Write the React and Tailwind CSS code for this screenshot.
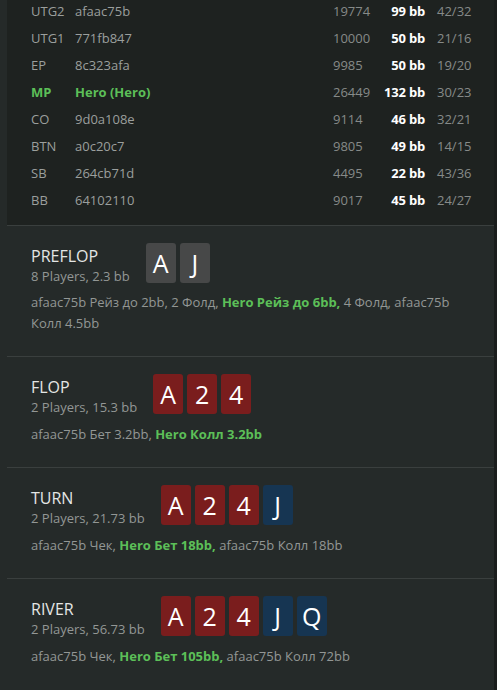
const players = [
  { pos: "UTG2", name: "afaac75b", stack: "19774", bb: "99 bb", stats: "42/32" },
  { pos: "UTG1", name: "771fb847", stack: "10000", bb: "50 bb", stats: "21/16" },
  { pos: "EP", name: "8c323afa", stack: "9985", bb: "50 bb", stats: "19/20" },
  { pos: "MP", name: "Hero (Hero)", stack: "26449", bb: "132 bb", stats: "30/23", hero: true },
  { pos: "CO", name: "9d0a108e", stack: "9114", bb: "46 bb", stats: "32/21" },
  { pos: "BTN", name: "a0c20c7", stack: "9805", bb: "49 bb", stats: "14/15" },
  { pos: "SB", name: "264cb71d", stack: "4495", bb: "22 bb", stats: "43/36" },
  { pos: "BB", name: "64102110", stack: "9017", bb: "45 bb", stats: "24/27" },
];

const streets = [
  {
    title: "PREFLOP",
    sub: "8 Players, 2.3 bb",
    cards: [["A", "gray"], ["J", "gray"]],
    actions: [
      ["afaac75b Рейз до 2bb, 2 Фолд, ", false],
      ["Hero Рейз до 6bb,", true],
      [" 4 Фолд, afaac75b Колл 4.5bb", false],
    ],
    multi: true,
  },
  {
    title: "FLOP",
    sub: "2 Players, 15.3 bb",
    cards: [["A", "red"], ["2", "red"], ["4", "red"]],
    actions: [
      ["afaac75b Бет 3.2bb, ", false],
      ["Hero Колл 3.2bb", true],
    ],
  },
  {
    title: "TURN",
    sub: "2 Players, 21.73 bb",
    cards: [["A", "red"], ["2", "red"], ["4", "red"], ["J", "blue"]],
    actions: [
      ["afaac75b Чек, ", false],
      ["Hero Бет 18bb,", true],
      [" afaac75b Колл 18bb", false],
    ],
  },
  {
    title: "RIVER",
    sub: "2 Players, 56.73 bb",
    cards: [["A", "red"], ["2", "red"], ["4", "red"], ["J", "blue"], ["Q", "blue"]],
    actions: [
      ["afaac75b Чек, ", false],
      ["Hero Бет 105bb,", true],
      [" afaac75b Колл 72bb", false],
    ],
    last: true,
  },
];

const cardBg = {
  gray: "bg-[#474848]",
  red: "bg-[#7a1d1d]",
  blue: "bg-[#163552]",
};

function Card({ rank, color }) {
  return (
    <div
      className={`w-[30px] h-[40px] rounded-[3px] flex items-center justify-center text-white text-[25px] leading-none ${cardBg[color]}`}
    >
      {rank}
    </div>
  );
}

export default function App() {
  return (
    <div
      className="w-[497px] h-[690px] overflow-hidden bg-[#252a29] flex"
      style={{ fontFamily: '"Open Sans", "Noto Sans", sans-serif' }}
    >
      <div className="w-[494px] shrink-0 pl-[7px]">
        {/* players table */}
        <div className="bg-[#1e2220] border-b border-[#3a3f3e] pl-[24px] pb-[11px] -mt-[2px]">
          {players.map((p) => (
            <div key={p.pos} className="h-[27px] flex items-center text-[13px] whitespace-nowrap">
              <div className={`w-[44px] ${p.hero ? "text-[#5cbf58] font-bold" : "text-[#9b9f9d]"}`}>{p.pos}</div>
              <div className={`w-[258px] ${p.hero ? "text-[#5cbf58] font-bold" : "text-[#9b9f9d]"}`}>{p.name}</div>
              <div className="w-[42px] text-[#868a88]">{p.stack}</div>
              <div className="w-[50px] flex justify-end text-white font-bold tracking-[-0.2px]">{p.bb}</div>
              <div className="ml-[12px] text-[#868a88]">{p.stats}</div>
            </div>
          ))}
        </div>

        {/* streets */}
        {streets.map((s) => (
          <div
            key={s.title}
            className={`pl-[24px] pr-[20px] pt-[17px] pb-[22px] ${s.last ? "" : "border-b border-[#3a3f3e]"}`}
          >
            <div className="flex items-start gap-[16px]">
              <div className="pt-[3px]">
                <div className="text-[16px] leading-[20px] text-[#e4e6e5]">{s.title}</div>
                <div className="text-[13px] leading-[20px] text-[#939795]">{s.sub}</div>
              </div>
              <div className="flex gap-[4px]">
                {s.cards.map(([r, c], i) => (
                  <Card key={i} rank={r} color={c} />
                ))}
              </div>
            </div>
            <div className={`${s.multi ? "mt-[6px]" : "mt-[7px]"} text-[13px] leading-[21px] text-[#939795]`}>
              {s.actions.map(([t, hero], i) => (
                <span key={i} className={hero ? "text-[#5cbf58] font-bold" : ""}>
                  {t}
                </span>
              ))}
            </div>
          </div>
        ))}
      </div>
      <div className="flex-1 bg-[#1a1d1c]" />
    </div>
  );
}
